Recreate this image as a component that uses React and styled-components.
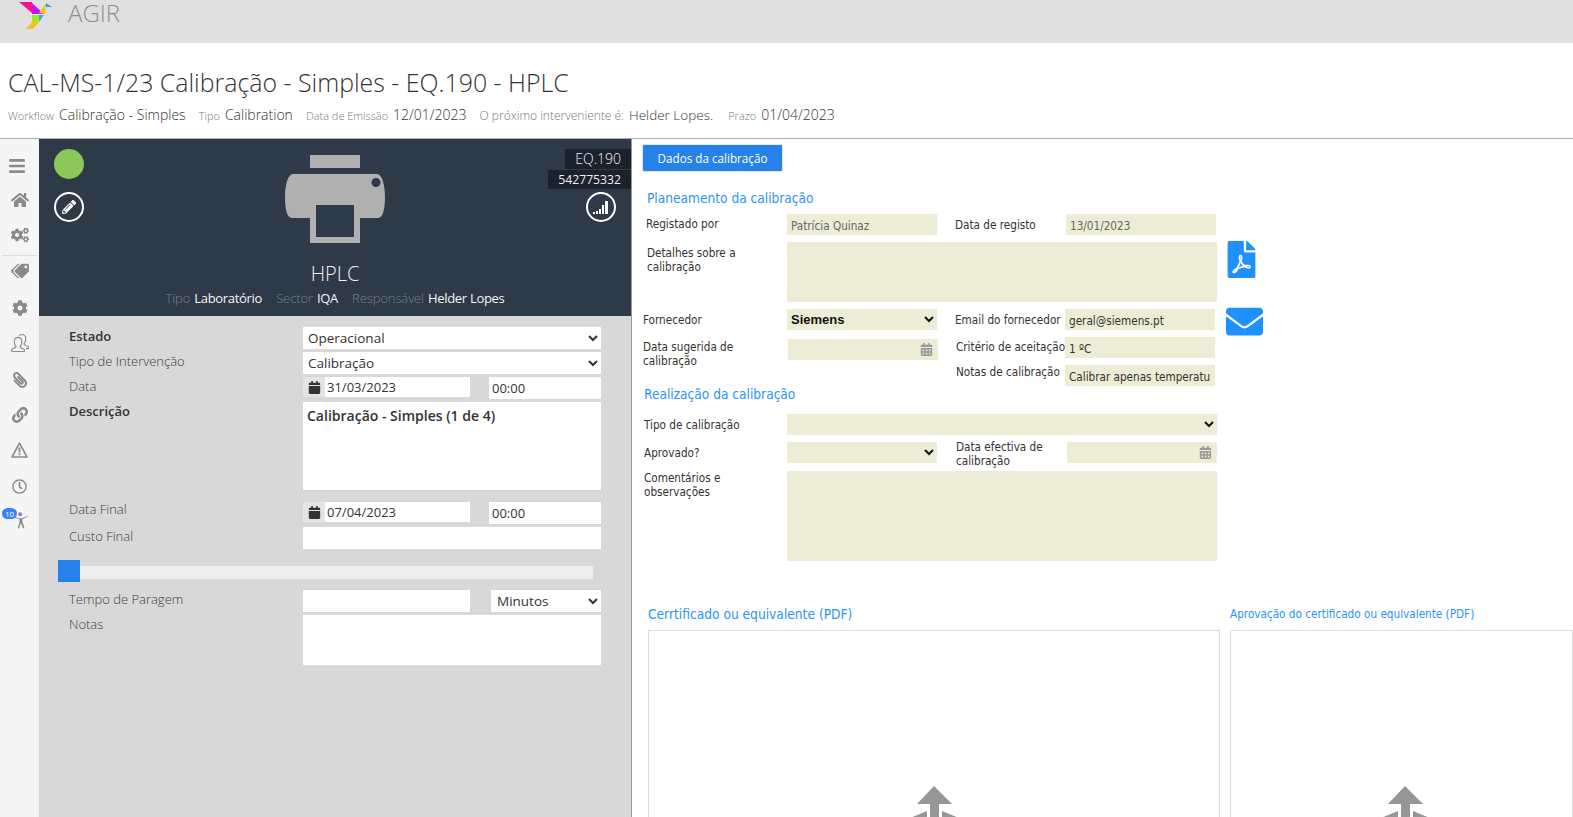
import React from "react";
import styled, { createGlobalStyle } from "styled-components";
import {
  FaBars, FaHome, FaCogs, FaTags, FaCog, FaPaperclip, FaLink,
  FaRegClock, FaPencilAlt, FaCalendar, FaCalendarAlt, FaEnvelope, FaFilePdf,
} from "react-icons/fa";
import { SlPeople } from "react-icons/sl";

const Global = createGlobalStyle`
  html, body { margin: 0; padding: 0; height: 817px; overflow: hidden; background: #fff; }
  * { box-sizing: border-box; }
  body { font-family: "Open Sans", sans-serif; }
`;

const OPEN = `"Open Sans", sans-serif`;
const COND = `"DejaVu Sans Condensed", "DejaVu Sans", sans-serif`;

const Page = styled.div`display: flex; flex-direction: column; width: 1573px; height: 817px; overflow: hidden;`;
const TopBar = styled.header`
  height: 43px; background: #e0e0e0; display: flex; align-items: flex-start; padding-left: 19px; flex: none;
`;
const Brand = styled.div`
  font: 300 24px/26px ${OPEN}; color: #8f8f8f; margin-left: 15px;
`;
const TitleBlock = styled.div`height: 95px; flex: none; padding: 22px 0 0 8px; background: #fff;`;
const Title = styled.h1`
  margin: 0; font: 300 24.9px/35px ${OPEN}; color: #333; white-space: nowrap;
`;
const MetaRow = styled.div`display: flex; align-items: baseline; margin-top: 5px; white-space: nowrap;`;
const MetaKey = styled.span`font: 300 ${p => p.$fs || 11}px/20px ${OPEN}; color: #777; margin-right: 5px;`;
const MetaVal = styled.span`font: 300 ${p => p.$fs || 14}px/20px ${OPEN}; color: #333; margin-right: ${p => p.$mr || 13}px;`;

const Main = styled.main`display: flex; flex: 1; min-height: 0; border-top: 1px solid #acacac;`;
const Sidebar = styled.nav`
  width: 39px; flex: none; background: #f5f5f5; display: flex; flex-direction: column; align-items: center;
  padding-top: 9px;
`;
const NavItem = styled.div`
  position: relative; width: 100%; height: ${p => p.$h}px; display: flex; align-items: center; justify-content: center;
  color: #8a8a8a; font-size: ${p => p.$size || 18}px; padding-right: ${p => p.$pr || 0}px;
  svg { transform: ${p => (p.$flip ? "scaleX(-1)" : "none")}; }
`;
const NavRule = styled.hr`width: 35px; margin: 0; border: 0; border-top: 1px solid #ddd; height: 1px; flex: none;`;
const Badge = styled.span`
  position: absolute; left: 2px; top: 10px; width: 15px; height: 11px; border-radius: 6px; background: #3b82f6;
  color: #fff; font: 400 8px/11px ${OPEN}; text-align: center;
`;

const LeftCol = styled.section`
  width: 593px; flex: none; background: #d8d8d8; border-right: 1px solid #9a9a9a; display: flex; flex-direction: column;
`;
const Hero = styled.div`
  height: 177px; flex: none; background: #2e3a47; display: grid; grid-template-columns: 100px 1fr 100px; 
`;
const HeroLeft = styled.div`display: flex; flex-direction: column; gap: 13px; padding: 10px 0 0 15px;`;
const StatusDot = styled.div`width: 30px; height: 30px; border-radius: 50%; background: #8bc75a;`;
const RoundBtn = styled.div`
  width: 30px; height: 30px; border-radius: 50%; border: 2px solid #fff; color: #fff; font-size: 14px;
  display: flex; align-items: center; justify-content: center; flex: none;
`;
const HeroCenter = styled.div`display: flex; flex-direction: column; align-items: center; padding-top: 16px;`;
const HeroName = styled.div`font: 300 20px/28px ${OPEN}; color: #f2f2f2; margin-top: 17px;`;
const HeroMeta = styled.div`display: flex; white-space: nowrap; gap: 14px; font: 400 13px/20px ${OPEN}; letter-spacing: -0.3px;`;
const HeroKey = styled.span`color: #76828e; font-weight: 300; margin-right: 4px; letter-spacing: -0.1px;`;
const HeroVal = styled.span`color: #f5f5f5;`;
const HeroRight = styled.div`display: flex; flex-direction: column; align-items: flex-end; padding-top: 10px;`;
const CodeTag = styled.div`
  background: #1a222c; color: #f0f0f0; font: ${p => p.$fw} ${p => p.$fs}px/${p => p.$h}px ${OPEN}; height: ${p => p.$h}px;
  padding: 0 10px; margin-bottom: 1px;
`;
const SignalBtn = styled(RoundBtn)`margin: 2px 15px 0 0;`;

const LeftForm = styled.div`padding: 11px 30px 0 30px; display: flex; flex-direction: column; flex: 1;`;
const LRow = styled.div`
  display: grid; grid-template-columns: 234px 1fr; margin-top: ${p => p.$mt ?? 3}px; 
`;
const LLabel = styled.label`
  font: ${p => (p.$bold ? 600 : 300)} 13px/20px ${OPEN}; color: ${p => (p.$bold ? "#333" : "#3c3c3c")}; margin-top: ${p => p.$y ?? -1}px;
`;
const LSelect = styled.select`
  width: 100%; height: 22px; border: 0; background: #fff; font: 400 13.5px ${OPEN}; color: #333; padding: 0 0 0 1px; outline: 0;
`;
const LInput = styled.input`
  width: ${p => p.$w || "100%"}; height: 22px; border: 0; background: #fff; font: 400 13px ${OPEN}; color: #333; padding: 0 3px; outline: 0; display: block;
`;
const DatePair = styled.div`display: flex; justify-content: space-between; align-items: flex-start;`;
const DateGroup = styled.div`display: flex; width: 167px; height: 20px; background: #fff;`;
const DateAddon = styled.span`
  width: 22px; flex: none; background: #e4e4e4; color: #333; font-size: 13px; display: flex; align-items: center; justify-content: center;
`;
const DateText = styled.input`
  width: 100%; border: 0; min-width: 0; background: #fff; font: 400 13px ${OPEN}; color: #333; padding: 0 0 0 2px; outline: 0;
`;
const TimeInput = styled(LInput)`width: 112px;`;
const LText = styled.textarea`
  display: block; width: 100%; height: ${p => p.$h}px; border: 0; background: #fff; resize: none; padding: 4px; outline: 0;
  font: ${p => p.$fw || 400} 14px/20px ${OPEN}; color: #333; overflow: hidden;
`;
const Slider = styled.div`
  position: relative; height: 13px; background: #eee; width: 535px; margin: 17px 0 0 -11px; flex: none;
`;
const Handle = styled.div`position: absolute; left: 0; top: -6px; width: 22px; height: 22px; background: #2781ea;`;
const UnitSelect = styled(LSelect)`width: 110px; padding-left: 2px;`;

const RightCol = styled.section`flex: 1; min-width: 0; background: #fff; padding: 5px 0 0 11px; display: flex; flex-direction: column; overflow: hidden;`;
const TabBtn = styled.button`
  width: 141px; height: 28px; margin-left: -1px; background: #2781ea; border: 1px solid #dfe8f3; border-radius: 2px; color: #fff; font: 400 11.7px ${OPEN}; padding: 0; flex: none;
`;
const SectionHead = styled.h3`
  margin: ${p => p.$mt}px 0 0 ${p => p.$x}px; font: 400 13.6px/20px ${COND}; color: #2a95f8; height: 20px;
`;
const FormRow = styled.div`
  display: grid; grid-template-columns: 144px 150px 128px 150px auto; height: ${p => p.$h}px; margin-top: ${p => p.$mt}px;
`;
const RLabel = styled.label`
  font: 400 11.65px/14px ${COND}; color: #333; margin-left: ${p => p.$x || 0}px; margin-top: ${p => p.$y ?? 2}px; grid-column: ${p => p.$col || "auto"};
  white-space: ${p => (p.$wrap ? "normal" : "nowrap")}; width: ${p => (p.$wrap ? p.$wrap + "px" : "auto")};
`;
const RInput = styled.input`
  display: block; width: 150px; height: 21px; border: 0; outline: 0; padding: 2px 4px 0; background: #ededd5; margin: ${p => p.$y || 0}px 0 0 ${p => p.$x || 0}px;
  font: 400 11.65px ${COND}; color: ${p => (p.$muted ? "#666" : "#333")}; grid-column: ${p => p.$col || "auto"};
`;
const RSelect = styled.select`
  display: block; width: ${p => p.$w || 150}px; height: 21px; border: 0; outline: 0; padding: 0; background: #ededd5; grid-column: ${p => p.$span || "auto"};
  font: ${p => (p.$bold ? 700 : 400)} 13px "Liberation Sans", sans-serif; color: #111;
`;
const RArea = styled.div`
  width: 430px; height: ${p => p.$h}px; background: #ededd5; grid-column: 2 / span 3;
`;
const RDate = styled.div`
  width: ${p => p.$w || 150}px; height: 21px; background: #ededd5; margin: ${p => p.$y || 0}px 0 0 ${p => p.$x || 0}px; display: flex; align-items: center; justify-content: flex-end; padding-right: 5px;
  color: #999; font-size: 13px;
`;
const SideIcon = styled.div`color: #1e90ff; margin: ${p => p.$y}px 0 0 ${p => p.$x}px; line-height: 0;`;
const UploadRow = styled.div`display: grid; grid-template-columns: 572px 1fr; column-gap: 10px; margin: 43px 0 0 5px; flex: none;`;
const UploadTitle = styled.div`
  font: 400 ${p => p.$fs}px/20px ${COND}; color: #2a95f8; white-space: nowrap; height: 26px;
`;
const UploadBox = styled.div`
  height: 300px; border: 1px solid #ddd; border-width: 1px 1px 0 1px; display: flex; justify-content: center; padding: 155px 0 0 ${p => p.$pl || 0}px;
`;
const UploadGlyph = styled.svg`width: 50px; height: 32px; fill: #969696; flex: none;`;

const Logo = () => (
  <svg width="34" height="29" viewBox="0 0 34 29">
    <polygon points="0,2 13,2 13,13" fill="#f5148f" />
    <polygon points="13,3 25,14 13,14" fill="#c514ee" />
    <polygon points="20,13 27,3 26,14" fill="#f9bf1e" />
    <polygon points="27,3 33,7 27,7" fill="#2f9cf5" />
    <polygon points="13,15 20,15 20,22 13,22" fill="#a6e81e" />
    <polygon points="20,15 25,15 20,22" fill="#2fb5d5" />
    <polygon points="13,22 20,22 14,29 7,29" fill="#f9bf1e" />
  </svg>
);

const Printer = () => (
  <svg width="100" height="88" viewBox="0 0 100 88" fill="#b0b0b0">
    <rect x="25" y="0" width="50" height="13" />
    <path fillRule="evenodd" d="M8 19H92C97 19 100 30 100 42C100 54 98 63 93 63H75V88H25V63H7C2 63 0 54 0 42C0 30 3 19 8 19ZM31 50V82H69V50ZM91 23A4.5 4.5 0 1 0 91.01 32A4.5 4.5 0 1 0 91 23Z" />
  </svg>
);

const SignalGlyph = () => (
  <svg width="16" height="13" viewBox="0 0 16 13" fill="#fff">
    <rect x="0" y="11" width="2" height="2" /><rect x="3" y="10" width="2" height="3" />
    <rect x="6" y="8" width="2" height="5" /><rect x="9" y="4" width="2" height="9" /><rect x="12" y="0" width="3" height="13" />
  </svg>
);

const Figure = () => (
  <svg width="15" height="18" viewBox="0 0 22 24" fill="#8a8a8a" style={{ marginLeft: 4 }}>
    <circle cx="9" cy="3.5" r="3" />
    <path d="M1 7l6 2.5h4.5L20 6l.4 1-8 4v4l3 9h-2.2L10 16.5 7.5 24H5.4l2.6-9v-4L.6 8z" />
  </svg>
);

const WarnOutline = () => (
  <svg width="17" height="16" viewBox="0 0 17 16" fill="none">
    <path d="M8.5 1.2L16 15H1Z" stroke="#8a8a8a" strokeWidth="1.6" strokeLinejoin="round" />
    <rect x="7.6" y="5.5" width="1.8" height="5" fill="#8a8a8a" />
    <rect x="7.6" y="11.3" width="1.8" height="1.8" fill="#8a8a8a" />
  </svg>
);

const UploadIcon = () => (
  <UploadGlyph viewBox="0 0 50 32">
    <polygon points="25,0 43,18 8,18" />
    <rect x="21" y="18" width="9" height="14" />
    <polygon points="1,32 18,25 18,32" />
    <polygon points="33,25 50,32 33,32" />
  </UploadGlyph>
);

const Opt = ({ children }) => <option>{children}</option>;

export default function App() {
  return (
    <Page>
      <Global />
      <TopBar>
        <Logo />
        <Brand>AGIR</Brand>
      </TopBar>
      <TitleBlock>
        <Title>CAL-MS-1/23 Calibração - Simples - EQ.190 - HPLC</Title>
        <MetaRow>
          <MetaKey>Workflow</MetaKey><MetaVal>Calibração - Simples</MetaVal>
          <MetaKey>Tipo</MetaKey><MetaVal>Calibration</MetaVal>
          <MetaKey>Data de Emissão</MetaKey><MetaVal>12/01/2023</MetaVal>
          <MetaKey $fs={12}>O próximo interveniente é:</MetaKey><MetaVal $fs={13.5} $mr={15}>Helder Lopes.</MetaVal>
          <MetaKey>Prazo</MetaKey><MetaVal>01/04/2023</MetaVal>
        </MetaRow>
      </TitleBlock>
      <Main>
        <Sidebar>
          <NavItem $h={36} $pr={5}><FaBars /></NavItem>
          <NavItem $h={31}><FaHome /></NavItem>
          <NavItem $h={40}><FaCogs /></NavItem>
          <NavRule />
          <NavItem $h={30} $flip><FaTags /></NavItem>
          <NavItem $h={44} $size={16}><FaCog /></NavItem>
          <NavItem $h={26}><SlPeople /></NavItem>
          <NavItem $h={48} $size={16} $flip><FaPaperclip /></NavItem>
          <NavItem $h={22} $size={16}><FaLink /></NavItem>
          <NavItem $h={48}><WarnOutline /></NavItem>
          <NavItem $h={24} $size={15}><FaRegClock /></NavItem>
          <NavItem $h={44}><Figure /><Badge>10</Badge></NavItem>
        </Sidebar>
        <LeftCol>
          <Hero>
            <HeroLeft>
              <StatusDot />
              <RoundBtn><FaPencilAlt /></RoundBtn>
            </HeroLeft>
            <HeroCenter>
              <Printer />
              <HeroName>HPLC</HeroName>
              <HeroMeta>
                <span><HeroKey>Tipo</HeroKey><HeroVal>Laboratório</HeroVal></span>
                <span><HeroKey>Sector</HeroKey><HeroVal>IQA</HeroVal></span>
                <span><HeroKey>Responsável</HeroKey><HeroVal>Helder Lopes</HeroVal></span>
              </HeroMeta>
            </HeroCenter>
            <HeroRight>
              <CodeTag $fw={300} $fs={14} $h={20}>EQ.190</CodeTag>
              <CodeTag $fw={400} $fs={12.2} $h={19}>542775332</CodeTag>
              <SignalBtn><SignalGlyph /></SignalBtn>
            </HeroRight>
          </Hero>
          <LeftForm>
            <LRow $mt={0}>
              <LLabel $bold>Estado</LLabel>
              <LSelect defaultValue="Operacional"><Opt>Operacional</Opt></LSelect>
            </LRow>
            <LRow>
              <LLabel>Tipo de Intervenção</LLabel>
              <LSelect defaultValue="Calibração"><Opt>Calibração</Opt></LSelect>
            </LRow>
            <LRow>
              <LLabel>Data</LLabel>
              <DatePair>
                <DateGroup><DateAddon><FaCalendar /></DateAddon><DateText readOnly value="31/03/2023" /></DateGroup>
                <TimeInput readOnly value="00:00" />
              </DatePair>
            </LRow>
            <LRow>
              <LLabel $bold>Descrição</LLabel>
              <LText $h={88} $fw={600} readOnly value="Calibração - Simples (1 de 4)" />
            </LRow>
            <LRow $mt={12}>
              <LLabel $y={-3}>Data Final</LLabel>
              <DatePair>
                <DateGroup><DateAddon><FaCalendar /></DateAddon><DateText readOnly value="07/04/2023" /></DateGroup>
                <TimeInput readOnly value="00:00" />
              </DatePair>
            </LRow>
            <LRow>
              <LLabel>Custo Final</LLabel>
              <LInput readOnly />
            </LRow>
            <Slider><Handle /></Slider>
            <LRow $mt={11}>
              <LLabel>Tempo de Paragem</LLabel>
              <DatePair>
                <LInput $w="167px" readOnly />
                <UnitSelect defaultValue="Minutos"><Opt>Minutos</Opt></UnitSelect>
              </DatePair>
            </LRow>
            <LRow>
              <LLabel>Notas</LLabel>
              <LText $h={50} readOnly />
            </LRow>
          </LeftForm>
        </LeftCol>
        <RightCol>
          <TabBtn>Dados da calibração</TabBtn>
          <SectionHead $mt={16} $x={4}>Planeamento da calibração</SectionHead>
          <FormRow $h={21} $mt={6}>
            <RLabel $x={3} $y={3}>Registado por</RLabel>
            <RInput readOnly $muted value="Patrícia Quinaz" />
            <RLabel $x={18} $y={4}>Data de registo</RLabel>
            <RInput readOnly $muted $x={1} value="13/01/2023" />
          </FormRow>
          <FormRow $h={60} $mt={7}>
            <RLabel $x={4} $wrap={110} $y={4}>Detalhes sobre a calibração</RLabel>
            <RArea $h={60} />
            <SideIcon $x={8} $y={-1}><FaFilePdf size={37} /></SideIcon>
          </FormRow>
          <FormRow $h={21} $mt={7}>
            <RLabel $y={4}>Fornecedor</RLabel>
            <RSelect $bold defaultValue="Siemens"><Opt>Siemens</Opt></RSelect>
            <RLabel $x={18} $y={4}>Email do fornecedor</RLabel>
            <RInput readOnly value="geral@siemens.pt" />
            <SideIcon $x={11} $y={-6}><FaEnvelope size={37} /></SideIcon>
          </FormRow>
          <FormRow $h={23} $mt={7}>
            <RLabel $wrap={120} $y={3}>Data sugerida de calibração</RLabel>
            <RDate $x={1} $y={2}><FaCalendarAlt /></RDate>
            <RLabel $x={19} $y={3}>Critério de aceitação</RLabel>
            <RInput readOnly value="1 ºC" />
          </FormRow>
          <FormRow $h={21} $mt={5}>
            <RLabel $col={3} $x={19} $y={0}>Notas de calibração</RLabel>
            <RInput readOnly value="Calibrar apenas temperatura" />
          </FormRow>
          <SectionHead $mt={-2} $x={1}>Realização da calibração</SectionHead>
          <FormRow $h={21} $mt={10}>
            <RLabel $x={1} $y={4}>Tipo de calibração</RLabel>
            <RSelect $w={430} $span="2 / span 3" defaultValue=""><Opt></Opt></RSelect>
          </FormRow>
          <FormRow $h={21} $mt={7}>
            <RLabel $x={1} $y={4}>Aprovado?</RLabel>
            <RSelect defaultValue=""><Opt></Opt></RSelect>
            <RLabel $x={19} $wrap={100} $y={-2}>Data efectiva de calibração</RLabel>
            <RDate $x={2}><FaCalendarAlt /></RDate>
          </FormRow>
          <FormRow $h={90} $mt={8}>
            <RLabel $x={1} $wrap={90} $y={0}>Comentários e observações</RLabel>
            <RArea $h={90} />
          </FormRow>
          <UploadRow>
            <UploadTitle $fs={13.65}>Cerrtificado ou equivalente (PDF)</UploadTitle>
            <UploadTitle $fs={11.66}>Aprovação do certificado ou equivalente (PDF)</UploadTitle>
            <UploadBox><UploadIcon /></UploadBox>
            <UploadBox $pl={6}><UploadIcon /></UploadBox>
          </UploadRow>
        </RightCol>
      </Main>
    </Page>
  );
}
